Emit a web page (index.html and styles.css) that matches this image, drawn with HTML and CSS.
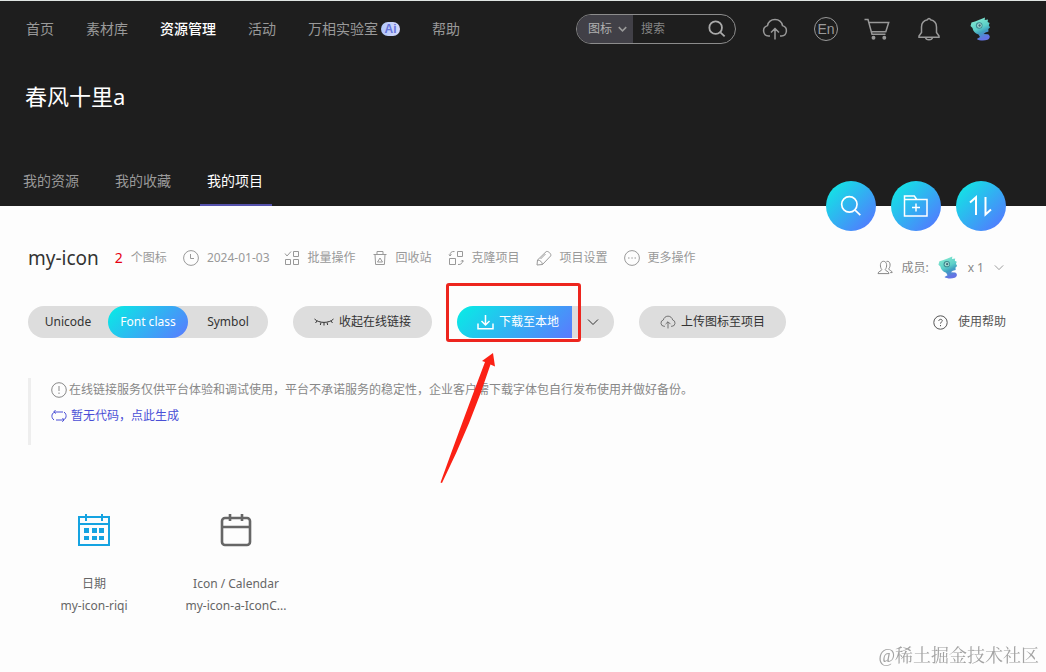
FILE: index.html
```html
<!DOCTYPE html>
<html lang="zh-CN">
<head>
<meta charset="utf-8">
<meta name="viewport" content="width=device-width, initial-scale=1">
<title>my-icon</title>
<link rel="stylesheet" href="styles.css">
</head>
<body>
<svg class="defs" width="0" height="0" aria-hidden="true">
  <defs>
    <linearGradient id="skin" x1="0" y1="0" x2="0.4" y2="1">
      <stop offset="0" stop-color="#8ff0d2"/><stop offset="0.55" stop-color="#5ccfc8"/><stop offset="0.75" stop-color="#3f9fc0"/><stop offset="1" stop-color="#6474e4"/>
    </linearGradient>
    <symbol id="avatar" viewBox="0 0 24 24">
      <path fill="url(#skin)" d="M2.500 5.500 6 4.500l5-2L16 .5l-.3 2.500L19 2.500l-.4 2.500 2 1-.8 2.200 1.200 2.300-1.700 1.500.2 2.500-3 1-2 1.500 4.500.2c2.500 1.300 2.300 4.300-.5 5.600-3.500 1.300-8.500.9-10.700-.8l3.200-2-1.500-2.500C6 16.500 4 14 3.500 11L1.500 9z"/>
      <circle cx="10.200" cy="8.500" r="3.300" fill="#3e8a92"/><circle cx="10.400" cy="8.500" r="2.300" fill="#a5e0d5"/><circle cx="10.600" cy="8.500" r="1.200" fill="#416878"/>
    </symbol>
    <symbol id="search" viewBox="0 0 20 20"><circle cx="8.500" cy="8.500" r="7"/><path d="m13.700 13.700 4.800 4.600"/></symbol>
    <symbol id="upload" viewBox="0 0 26 22"><path d="M8 18H6.500a5.300 5.300 0 0 1-1-10.400C6.300 4 9.300 1.500 13 1.500s6.700 2.500 7.500 6.100a5.300 5.300 0 0 1-1 10.400H18M13 21.500V11M9 14.500l4-4 4 4"/></symbol>
    <symbol id="chevron" viewBox="0 0 12 8"><path d="m1 1.500 5 5 5-5"/></symbol>
  </defs>
</svg>

<header class="header">
  <div class="topbar">
    <nav class="nav">
      <a href="#">首页</a>
      <a href="#">素材库</a>
      <a href="#" class="is-active">资源管理</a>
      <a href="#">活动</a>
      <a href="#" class="nav-lab">万相实验室<span class="ai">Ai</span></a>
      <a href="#">帮助</a>
    </nav>
    <div class="tools">
      <form class="search">
        <span class="search-type">
          <select aria-label="搜索类型"><option>图标</option></select>
          <svg class="line" width="9" height="6"><use href="#chevron"/></svg>
        </span>
        <input type="text" placeholder="搜索" aria-label="搜索">
        <button type="button" aria-label="提交搜索"><svg class="line" width="18" height="18"><use href="#search"/></svg></button>
      </form>
      <a href="#" class="tool" aria-label="上传"><svg class="line" width="26" height="22"><use href="#upload"/></svg></a>
      <a href="#" class="lang">En</a>
      <a href="#" class="tool" aria-label="购物车"><svg class="line" width="26" height="22" viewBox="0 0 26 22"><path d="M.5 1.500H4l4 14.800h13.500M5 4.500h19.700l-2.900 9.300H7.500"/><circle cx="9.500" cy="19.800" r="1.200" fill="currentColor"/><circle cx="20.300" cy="19.800" r="1.200" fill="currentColor"/></svg></a>
      <a href="#" class="tool" aria-label="通知"><svg class="line" width="22" height="24" viewBox="0 0 22 24"><path d="M11 1.500c-.8 0-1.300.6-1.500 1.200C5.500 3.500 3.500 6.600 3.500 10v5.500L1 19v1.200h20V19l-2.500-3.500V10c0-3.400-2-6.500-6-7.300-.2-.6-.7-1.200-1.500-1.200zM7.500 20.500c.5 3 6.500 3 7 0"/></svg></a>
      <a href="#" class="tool" aria-label="个人中心"><svg width="24" height="24"><use href="#avatar"/></svg></a>
    </div>
  </div>
  <h1 class="user">春风十里a</h1>
  <nav class="tabs">
    <a href="#">我的资源</a>
    <a href="#">我的收藏</a>
    <a href="#" class="is-active">我的项目</a>
  </nav>
  <div class="rounds">
    <button type="button" aria-label="搜索项目"><svg class="line" width="22" height="22"><use href="#search"/></svg></button>
    <button type="button" aria-label="新建项目"><svg class="line" width="26" height="24" viewBox="0 0 26 24"><path d="M1.500 22V2h9.800l2.500 3.500H24V22zM1.500 5.500h12.300M13 9.500v8M9 13.500h8"/></svg></button>
    <button type="button" aria-label="排序"><svg class="line sort" width="26" height="22" viewBox="0 0 26 22"><path d="m2 7.500 6-5.300V20M17.500 2v17.500l5.500-5"/></svg></button>
  </div>
</header>

<main class="main">
  <div class="project">
    <div class="info">
      <h2>my-icon</h2>
      <span class="count">2</span>
      <span class="unit">个图标</span>
      <span class="meta"><svg class="line" width="16" height="16" viewBox="0 0 16 16"><circle cx="8" cy="8" r="7.400"/><path d="M7.500 4v4.500H11"/></svg><time>2024-01-03</time></span>
      <a href="#" class="meta"><svg class="line" width="16" height="16" viewBox="0 0 16 16"><path d="m1 3.500 2 2.500 4-4.500M9.500 1.500h5v5h-5zM1.500 9.500h5v5h-5zM9.500 9.500h5v5h-5z"/></svg>批量操作</a>
      <a href="#" class="meta"><svg class="line" width="16" height="16" viewBox="0 0 16 16"><path d="M1.500 4.500h13M5 4V1.500h6V4M3 4.500l.6 10h8.800l.6-10M5.500 12 8 8l2.500 4z"/></svg>回收站</a>
      <a href="#" class="meta"><svg class="line" width="16" height="16" viewBox="0 0 16 16"><path d="M9.500 1.500h5v5h-5zM1.500 8.500h6v6h-6zM6.500 1.500C3.500 1.200 2 2.500 2 5.500M1 4.500l1 1.500 1.500-1.500M10 14.500c3 .2 4.500-1 4.500-4M13 11.500l1.500-1.500 1 1.500"/></svg>克隆项目</a>
      <a href="#" class="meta"><svg class="line" width="16" height="16" viewBox="0 0 16 16"><path d="M1 15 1.500 10l8.600-8.300c1.500-1.400 6 2.500 4.500 4.300L6.500 14.500zM1.500 10c2.500 0 4.700 2 5 4.500M4.500 9l5-5"/></svg>项目设置</a>
      <a href="#" class="meta"><svg class="line" width="16" height="16" viewBox="0 0 16 16"><circle cx="8" cy="8" r="7.400"/><path d="M4 8h1.500M7.300 8h1.500M10.500 8H12"/></svg>更多操作</a>
    </div>
    <button type="button" class="members">
      <svg class="line" width="16" height="16" viewBox="0 0 16 16"><path d="M4.800 9.600C2.800 7.300 2.600 1.300 6.500 1.300s3.800 6 1.700 8.300c0 1.500 3.800 1.500 3.800 4H1c0-2.500 3.800-2.500 3.800-4zM9.500 1.400c4.200-1 4.400 5 2.200 7.500 0 1.500 3.500 1.500 3.500 3.700h-2"/></svg>
      <span>成员:</span>
      <svg width="23" height="23"><use href="#avatar"/></svg>
      <span>x 1</span>
      <svg class="line members-arrow" width="10" height="7"><use href="#chevron"/></svg>
    </button>
  </div>

  <div class="actions">
    <div class="segment">
      <button type="button">Unicode</button>
      <button type="button" class="is-active">Font class</button>
      <button type="button">Symbol</button>
    </div>
    <button type="button" class="pill"><svg class="line" width="20" height="8" viewBox="0 0 20 8"><path d="M.5 1C5 5.500 15 5.500 19.500 1M3 3 1.500 5M7 4.500 6.300 7M10 4.500V7.500M13 4.500l.7 2.500M17 3l1.500 2"/></svg>收起在线链接</button>
    <div class="download">
      <button type="button" class="download-main"><svg class="line" width="17" height="15" viewBox="0 0 17 15"><path d="M1 8.500v5.300h15V8.500M8.500 0v9.500M4.500 6l4 4 4-4"/></svg>下载至本地</button>
      <button type="button" class="download-more" aria-label="更多下载选项"><svg class="line" width="12" height="8"><use href="#chevron"/></svg></button>
      <span class="mark-box"></span>
      <svg class="mark-arrow" width="56" height="132" viewBox="0 0 56 132"><path d="M53 1 55 14.500 50.500 12.500Q32 70 2 131L.5 130.500Q23 68 45 10L42 9z" fill="#fb2115"/></svg>
    </div>
    <button type="button" class="pill"><svg class="line" width="16" height="14"><use href="#upload"/></svg>上传图标至项目</button>
    <a href="#" class="help"><svg class="line" width="15" height="15" viewBox="0 0 15 15"><circle cx="7.500" cy="7.500" r="6.700"/><path d="M5.800 6c0-2.200 3.500-2.200 3.500-.2 0 1.200-1.800 1.300-1.800 2.800M7.500 10v1.200"/></svg>使用帮助</a>
  </div>

  <section class="notice">
    <p><svg class="line" width="16" height="16" viewBox="0 0 16 16"><circle cx="8" cy="8" r="7.300"/><path d="M8 4v5M8 10.500V12"/></svg>在线链接服务仅供平台体验和调试使用，平台不承诺服务的稳定性，企业客户需下载字体包自行发布使用并做好备份。</p>
    <a href="#"><svg class="line" width="16" height="14" viewBox="0 0 16 14"><path d="M3 11C-.5 8.500.5 3 5 3h7M4.500 1 2.800 3l2 1.500M13 3c3.500 2.500 2.500 8-2 8H5M11.500 9l1.500 2-1.700 1.800"/></svg>暂无代码，点此生成</a>
  </section>

  <ul class="icons">
    <li>
      <svg width="34" height="34" viewBox="0 0 34 34"><path fill="none" stroke="#15a3e1" stroke-width="2" d="M2 4h30v28H2zM2 11h30M9 1v7M25 1v7"/><path fill="#15a3e1" d="M7 15h5v5H7zm8 0h5v5h-5zm7 0h5v5h-5zM7 23h5v4H7zm8 0h5v4h-5zm7 0h5v4h-5z"/></svg>
      <span>日期</span>
      <span>my-icon-riqi</span>
    </li>
    <li>
      <svg width="34" height="34" viewBox="0 0 34 34"><g fill="none" stroke="#666" stroke-width="2.600"><rect x="3" y="5" width="28" height="27" rx="3"/><path d="M3 14h28M11 1v7M23 1v7"/></g></svg>
      <span>Icon / Calendar</span>
      <span>my-icon-a-IconC...</span>
    </li>
  </ul>
</main>
<div class="watermark">@稀土掘金技术社区</div>
</body>
</html>
```

FILE: styles.css
```css
* { box-sizing: border-box; }

body {
  margin: 0;
  background: #fdfdfd;
  color: #333;
  font: 12px/20px "Noto Sans", "Noto Sans CJK SC", sans-serif;
}

a { color: inherit; text-decoration: none; }

button, input, select {
  margin: 0;
  padding: 0;
  border: 0;
  background: none;
  color: inherit;
  font: inherit;
}

h1, h2, p, ul { margin: 0; padding: 0; font-weight: 400; }

svg { display: block; flex: none; }

.defs { position: absolute; }

.line {
  fill: none;
  stroke: currentColor;
  stroke-width: 1;
}

.header {
  position: relative;
  border-top: 1px solid #dfe5e2;
  background: #1e1e1e;
  color: #999;
  font-size: 14px;
}

.topbar {
  display: flex;
  align-items: center;
  justify-content: space-between;
  height: 56px;
  padding: 0 52px 0 26px;
}

.nav, .tools, .nav-lab { display: flex; align-items: center; }
.nav { gap: 32px; white-space: nowrap; }
.tools { gap: 26px; }
.nav .is-active, .tabs .is-active { color: #fff; }
.nav .is-active { font-weight: 500; }
.nav-lab { gap: 3px; }
.tools .line { stroke-width: 2; }
.tool { display: grid; place-items: center; width: 26px; }
.tools .tool .line { stroke-width: 1.5; }

.ai {
  width: 19px;
  border-radius: 7px;
  background: linear-gradient(90deg, #b0c7fb, #d6d8fb);
  color: #6574da;
  font: 700 12px/14px "Liberation Sans", sans-serif;
  text-align: center;
}

.search {
  display: flex;
  width: 160px;
  height: 30px;
  overflow: hidden;
  border: 1px solid #8c8c8c;
  border-radius: 15px;
  font-size: 12px;
}

.search-type {
  display: flex;
  align-items: center;
  width: 56px;
  flex: none;
  padding-left: 11px;
  background: #414047;
}

.search-type select { width: 30px; appearance: none; color: #b0b0b0; }
.search input { flex: 1; min-width: 0; padding-left: 8px; outline: 0; }
.search input::placeholder { color: #858585; opacity: 1; }
.search button { padding-right: 9px; color: #aaa; }

.lang {
  width: 24px;
  height: 24px;
  border: 1px solid #999;
  border-radius: 50%;
  font: 14px/22px "Liberation Sans", sans-serif;
  text-align: center;
}

.user {
  padding: 23px 25px 0;
  color: #fff;
  font-size: 22px;
  line-height: 32px;
}

.tabs { display: flex; gap: 20px; padding: 43px 16px 0; }

.tabs a {
  width: 72px;
  height: 51px;
  padding-right: 2px;
  border-bottom: 2px solid transparent;
  line-height: 51px;
  text-align: center;
}

.tabs .is-active { border-color: #5451ac; }

.rounds {
  position: absolute;
  right: 40px;
  bottom: -25px;
  display: flex;
  gap: 15px;
}

.rounds button {
  display: grid;
  place-items: center;
  width: 50px;
  height: 50px;
  border-radius: 50%;
  background: linear-gradient(135deg, #11e7e4 8%, #5378ff 92%);
  color: #fff;
}

.rounds .line { stroke-width: 1.5; }
.rounds .sort { stroke-width: 2; }

.main { padding: 36px 40px 40px 28px; }

.project, .info, .meta, .members, .actions, .download { display: flex; align-items: center; }
.project { justify-content: space-between; align-items: flex-start; color: #999; }
.info { gap: 16px; height: 32px; white-space: nowrap; }
.info h2 { color: #333; font-size: 19px; line-height: 32px; }
.count { color: #e60012; font-size: 14px; }
.unit { margin-left: -8px; }
.meta { gap: 8px; }
.meta time { margin-right: -2px; }
.members { gap: 8px; margin-top: 14px; color: #888; }
.members-arrow { margin: 0 2px; }

.actions { gap: 25px; margin-top: 27px; white-space: nowrap; }

.segment {
  display: flex;
  border-radius: 16px;
  background: #ddd;
}

.segment button { width: 80px; height: 32px; border-radius: 16px; }

.segment .is-active, .download-main {
  background: linear-gradient(135deg, #06eee5, #5b79ff);
  color: #fff;
}

.pill {
  display: flex;
  align-items: center;
  gap: 5px;
  height: 32px;
  padding: 0 21px;
  border-radius: 16px;
  background: #ddd;
}

.download { position: relative; }

.download-main {
  display: flex;
  align-items: center;
  gap: 5px;
  height: 32px;
  padding: 0 13px 0 20px;
  border-radius: 16px 0 0 16px;
}

.download-main .line { stroke-width: 1.5; }

.download-more {
  width: 42px;
  height: 32px;
  padding-left: 15px;
  border-radius: 0 16px 16px 0;
  background: #ddd;
}

.mark-box {
  position: absolute;
  top: -23px;
  left: -11px;
  width: 135px;
  height: 59px;
  border: 3px solid #ed251e;
  border-radius: 3px;
  pointer-events: none;
}

.mark-arrow { position: absolute; top: 46px; left: -17px; pointer-events: none; }

.help { display: flex; align-items: center; gap: 10px; margin-left: auto; color: #555; }

.notice {
  display: flex;
  flex-direction: column;
  align-items: flex-start;
  gap: 6px;
  margin-top: 40px;
  padding: 2px 0 19px 20px;
  border-left: 3px solid #eee;
  color: #888;
}

.notice p, .notice a { display: flex; align-items: center; gap: 2px; }
.notice a { gap: 4px; color: #4a4fd6; }

.icons {
  display: flex;
  gap: 10px;
  margin-top: 68px;
  list-style: none;
  color: #666;
  line-height: 22px;
}

.icons li {
  display: flex;
  flex-direction: column;
  align-items: center;
  width: 132px;
}

.icons svg { margin-bottom: 26px; }

.watermark {
  position: fixed;
  right: 7px;
  bottom: 2px;
  color: #a3a3a3;
  font: 18px/28px "Liberation Serif", "Noto Serif CJK SC", "Noto Sans CJK SC", serif;
}
```
